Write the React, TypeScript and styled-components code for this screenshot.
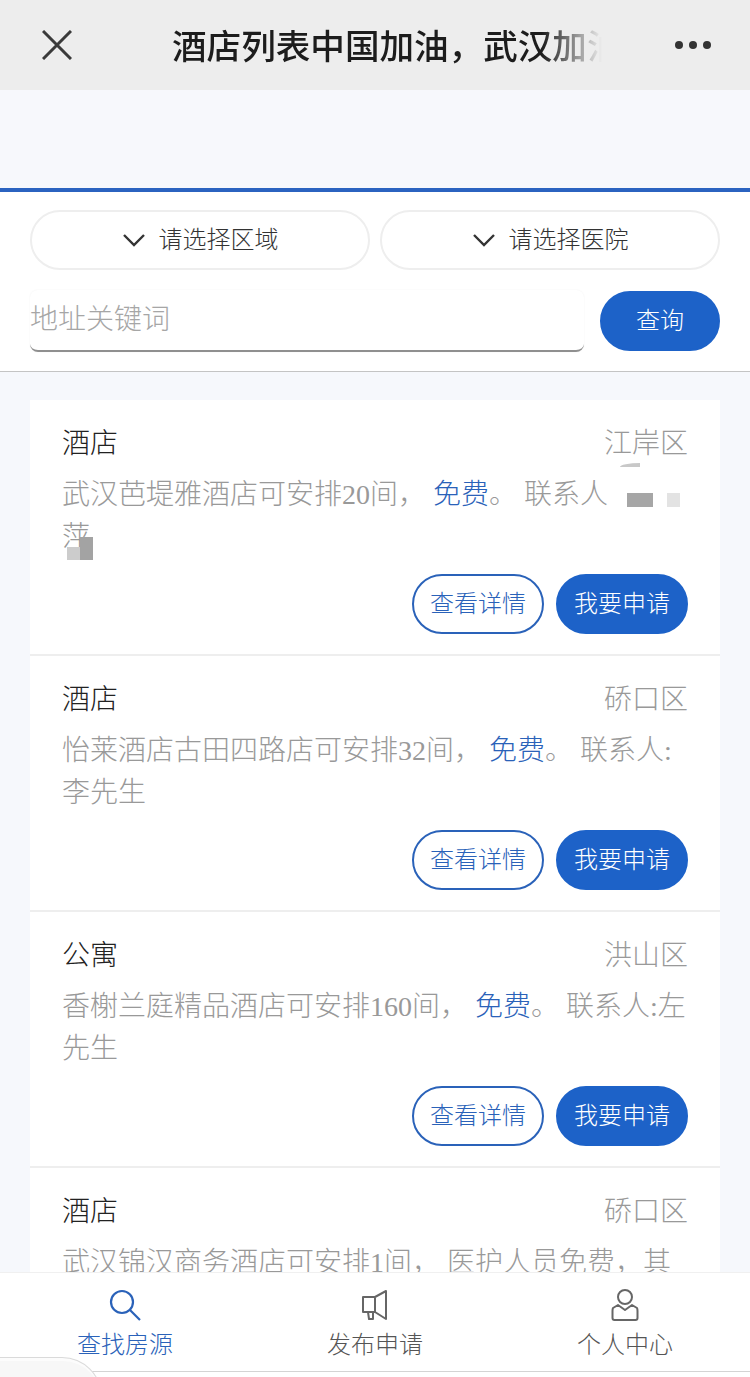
import { createGlobalStyle } from "styled-components";
import styled from "styled-components";

const GlobalStyle = createGlobalStyle`
  html, body {
    margin: 0;
    padding: 0;
    background: #f6f8fc;
  }
  * {
    box-sizing: border-box;
  }
`;

const Page = styled.div`
  position: relative;
  display: flex;
  flex-direction: column;
  width: 750px;
  height: 1377px;
  overflow: hidden;
  font-family: "Liberation Serif", "Noto Sans CJK SC", serif;
  background: #f6f8fc;
`;

const Header = styled.header`
  display: flex;
  align-items: center;
  flex: none;
  height: 90px;
  padding-left: 42px;
  background: #ededed;
`;

const Title = styled.div`
  width: 430px;
  margin-left: 100px;
  margin-right: 72px;
  padding-bottom: 3px;
  overflow: hidden;
  white-space: nowrap;
  font-family: "Noto Sans CJK SC", sans-serif;
  font-size: 34.6px;
  font-weight: 500;
  color: #1c1c1c;
  mask-image: linear-gradient(to right, #000 86%, transparent 100%);
`;

const Spacer = styled.div`
  flex: none;
  height: 98px;
  background: #f7f8fc;
  border-bottom: 4px solid #2b63c0;
  box-sizing: content-box;
`;

const FilterPanel = styled.section`
  display: flex;
  flex-direction: column;
  flex: none;
  height: 180px;
  padding: 18px 30px 0;
  background: #fff;
  border-bottom: 1px solid #c4c4c4;
`;

const SelectRow = styled.div`
  display: flex;
  gap: 10px;
`;

const SelectPill = styled.div`
  display: flex;
  align-items: center;
  justify-content: center;
  gap: 13px;
  width: 340px;
  height: 60px;
  padding-bottom: 5px;
  border: 2px solid #eeeeee;
  border-radius: 30px;
  font-family: "Noto Sans CJK SC", sans-serif;
  font-size: 24px;
  font-weight: 300;
  color: #333;
  svg {
    margin-top: 5px;
  }
`;

const SearchRow = styled.div`
  display: flex;
  align-items: center;
  justify-content: space-between;
  margin-top: 20px;
`;

const KeywordInput = styled.div`
  display: flex;
  align-items: center;
  width: 554px;
  height: 62px;
  padding-bottom: 6px;
  border-bottom: 2px solid #8f8f8f;
  border-radius: 8px;
  box-shadow: 0 0 2px rgb(0 0 0 / 6%);
  font-family: "Noto Sans CJK SC", sans-serif;
  font-size: 28px;
  font-weight: 300;
  color: #a6a6a6;
`;

const PillButton = styled.button<{ $outline?: boolean }>`
  width: 132px;
  height: 60px;
  padding: 0 0 5px;
  border: 2px solid ${(p) => (p.$outline ? "#2a62b9" : "#1d62c8")};
  border-radius: 30px;
  background: ${(p) => (p.$outline ? "#fff" : "#1d62c8")};
  color: ${(p) => (p.$outline ? "#2a62b9" : "#fff")};
  font-family: "Noto Sans CJK SC", sans-serif;
  font-size: 24px;
  font-weight: 300;
`;

const QueryButton = styled(PillButton)`
  width: 120px;
`;

const ListArea = styled.main`
  flex: 1;
  min-height: 0;
  overflow: hidden;
  padding: 28px 30px 0;
`;

const Card = styled.article`
  position: relative;
  height: 256px;
  padding: 20px 32px 0 33px;
  background: #fff;
  border-bottom: 2px solid #eeeeee;
`;

const CardHead = styled.div`
  display: flex;
  justify-content: space-between;
  height: 42px;
  line-height: 42px;
  font-family: "Noto Sans CJK SC", sans-serif;
  font-weight: 300;
`;

const Kind = styled.span`
  margin-left: -1px;
  font-size: 28px;
  color: #222;
`;

const District = styled.span`
  font-size: 28px;
  color: #999;
`;

const Body = styled.p`
  height: 84px;
  margin: 12px 0 0 -1px;
  font-size: 28px;
  font-weight: 300;
  line-height: 42px;
  white-space: pre-line;
  color: #999;
`;

const Free = styled.span`
  color: #2a62b9;
`;

const CardActions = styled.div`
  display: flex;
  justify-content: flex-end;
  gap: 12px;
  margin-top: 16px;
`;

const Mosaic = styled.i<{ $x: number; $y: number; $w: number; $h: number; $c: string; $curved?: boolean }>`
  position: absolute;
  left: ${(p) => p.$x}px;
  top: ${(p) => p.$y}px;
  width: ${(p) => p.$w}px;
  height: ${(p) => p.$h}px;
  background: ${(p) => p.$c};
  border-top-left-radius: ${(p) => (p.$curved ? "100%" : "0")};
`;

const TabBar = styled.nav`
  position: relative;
  display: flex;
  flex: none;
  height: 105px;
  padding-bottom: 6px;
  background: #fff;
  border-top: 1px solid #f0f0f0;
  &::after {
    content: "";
    position: absolute;
    left: 0;
    right: 0;
    bottom: 5px;
    height: 1px;
    background: #d4d4d4;
  }
`;

const Tab = styled.div<{ $active?: boolean }>`
  display: flex;
  flex-direction: column;
  align-items: center;
  flex: 1;
  padding-top: 16px;
  font-family: "Noto Sans CJK SC", sans-serif;
  font-size: 24px;
  font-weight: 300;
  line-height: 34px;
  color: ${(p) => (p.$active ? "#2a62b9" : "#555")};
  svg {
    display: block;
    margin-bottom: 5px;
  }
`;

const CornerTab = styled.div`
  position: absolute;
  z-index: 1;
  left: -12px;
  bottom: -20px;
  width: 114px;
  height: 40px;
  background: #f7f7f7;
  border: 1px solid #dadada;
  border-top-right-radius: 40px;
  box-shadow: inset 0 3px 0 #fcfcfc;
`;

const Chevron = () => (
  <svg width="24" height="14" viewBox="0 0 24 14" fill="none" stroke="#333" strokeWidth="2.4">
    <path d="M2 2l10 10L22 2" />
  </svg>
);

const CloseIcon = () => (
  <svg width="30" height="30" viewBox="0 0 30 30" fill="none" stroke="#3a3a3a" strokeWidth="3">
    <path d="M1 1l28 28M29 1L1 29" />
  </svg>
);

const MoreIcon = () => (
  <svg width="38" height="10" viewBox="0 0 38 10" fill="#333">
    <circle cx="5" cy="5" r="4" />
    <circle cx="19" cy="5" r="4" />
    <circle cx="33" cy="5" r="4" />
  </svg>
);

const SearchIcon = () => (
  <svg width="32" height="32" viewBox="0 0 32 32" fill="none" stroke="#2a62b9" strokeWidth="2.2">
    <circle cx="13" cy="13" r="11" />
    <path d="M21 21l10 10" />
  </svg>
);

const HornIcon = () => (
  <svg width="32" height="32" viewBox="0 0 32 32" fill="none" stroke="#666" strokeWidth="2" strokeLinejoin="round">
    <path d="M4 8h12v15H4zM16 8l11-6v28l-11-7M9 23l1 7h4v-7" />
  </svg>
);

const UserIcon = () => (
  <svg width="32" height="32" viewBox="0 0 32 32" fill="none" stroke="#666" strokeWidth="2" strokeLinejoin="round">
    <circle cx="16" cy="8" r="7" />
    <path d="M9 16l-5 3q-.500 1-.500 3v7q0 2 2 2h21q2 0 2-2v-7q0-2-.500-3l-5-3-7 5z" />
  </svg>
);

type Listing = {
  kind: string;
  district: string;
  before: string;
  after: string;
  masked?: boolean;
};

const listings: Listing[] = [
  { kind: "酒店", district: "江岸区", before: "武汉芭堤雅酒店可安排20间，", after: "联系人\n萍", masked: true },
  { kind: "酒店", district: "硚口区", before: "怡莱酒店古田四路店可安排32间，", after: "联系人:李先生" },
  { kind: "公寓", district: "洪山区", before: "香榭兰庭精品酒店可安排160间，", after: "联系人:左先生" },
];

export default function App() {
  return (
    <Page>
      <GlobalStyle />
      <Header>
        <CloseIcon />
        <Title>酒店列表中国加油，武汉加油</Title>
        <MoreIcon />
      </Header>
      <Spacer />
      <FilterPanel>
        <SelectRow>
          <SelectPill>
            <Chevron />
            请选择区域
          </SelectPill>
          <SelectPill>
            <Chevron />
            请选择医院
          </SelectPill>
        </SelectRow>
        <SearchRow>
          <KeywordInput>地址关键词</KeywordInput>
          <QueryButton>查询</QueryButton>
        </SearchRow>
      </FilterPanel>
      <ListArea>
        {listings.map((item) => (
          <Card key={item.before}>
            <CardHead>
              <Kind>{item.kind}</Kind>
              <District>{item.district}</District>
            </CardHead>
            <Body>
              {item.before} <Free>免费</Free>。 {item.after}
            </Body>
            <CardActions>
              <PillButton $outline>查看详情</PillButton>
              <PillButton>我要申请</PillButton>
            </CardActions>
            {item.masked && (
              <>
                <Mosaic $x={590} $y={63} $w={20} $h={4} $c="#c8c8c8" $curved />
                <Mosaic $x={597} $y={93} $w={26} $h={14} $c="#a6a6a6" />
                <Mosaic $x={637} $y={93} $w={13} $h={14} $c="#e3e3e3" />
                <Mosaic $x={37} $y={147} $w={13} $h={13} $c="#cccccc" />
                <Mosaic $x={50} $y={137} $w={13} $h={23} $c="#a3a3a3" />
              </>
            )}
          </Card>
        ))}
        <Card>
          <CardHead>
            <Kind>酒店</Kind>
            <District>硚口区</District>
          </CardHead>
          <Body>武汉锦汉商务酒店可安排1间， 医护人员免费，其</Body>
        </Card>
      </ListArea>
      <TabBar>
        <Tab $active>
          <SearchIcon />
          查找房源
        </Tab>
        <Tab>
          <HornIcon />
          发布申请
        </Tab>
        <Tab>
          <UserIcon />
          个人中心
        </Tab>
        <CornerTab />
      </TabBar>
    </Page>
  );
}
